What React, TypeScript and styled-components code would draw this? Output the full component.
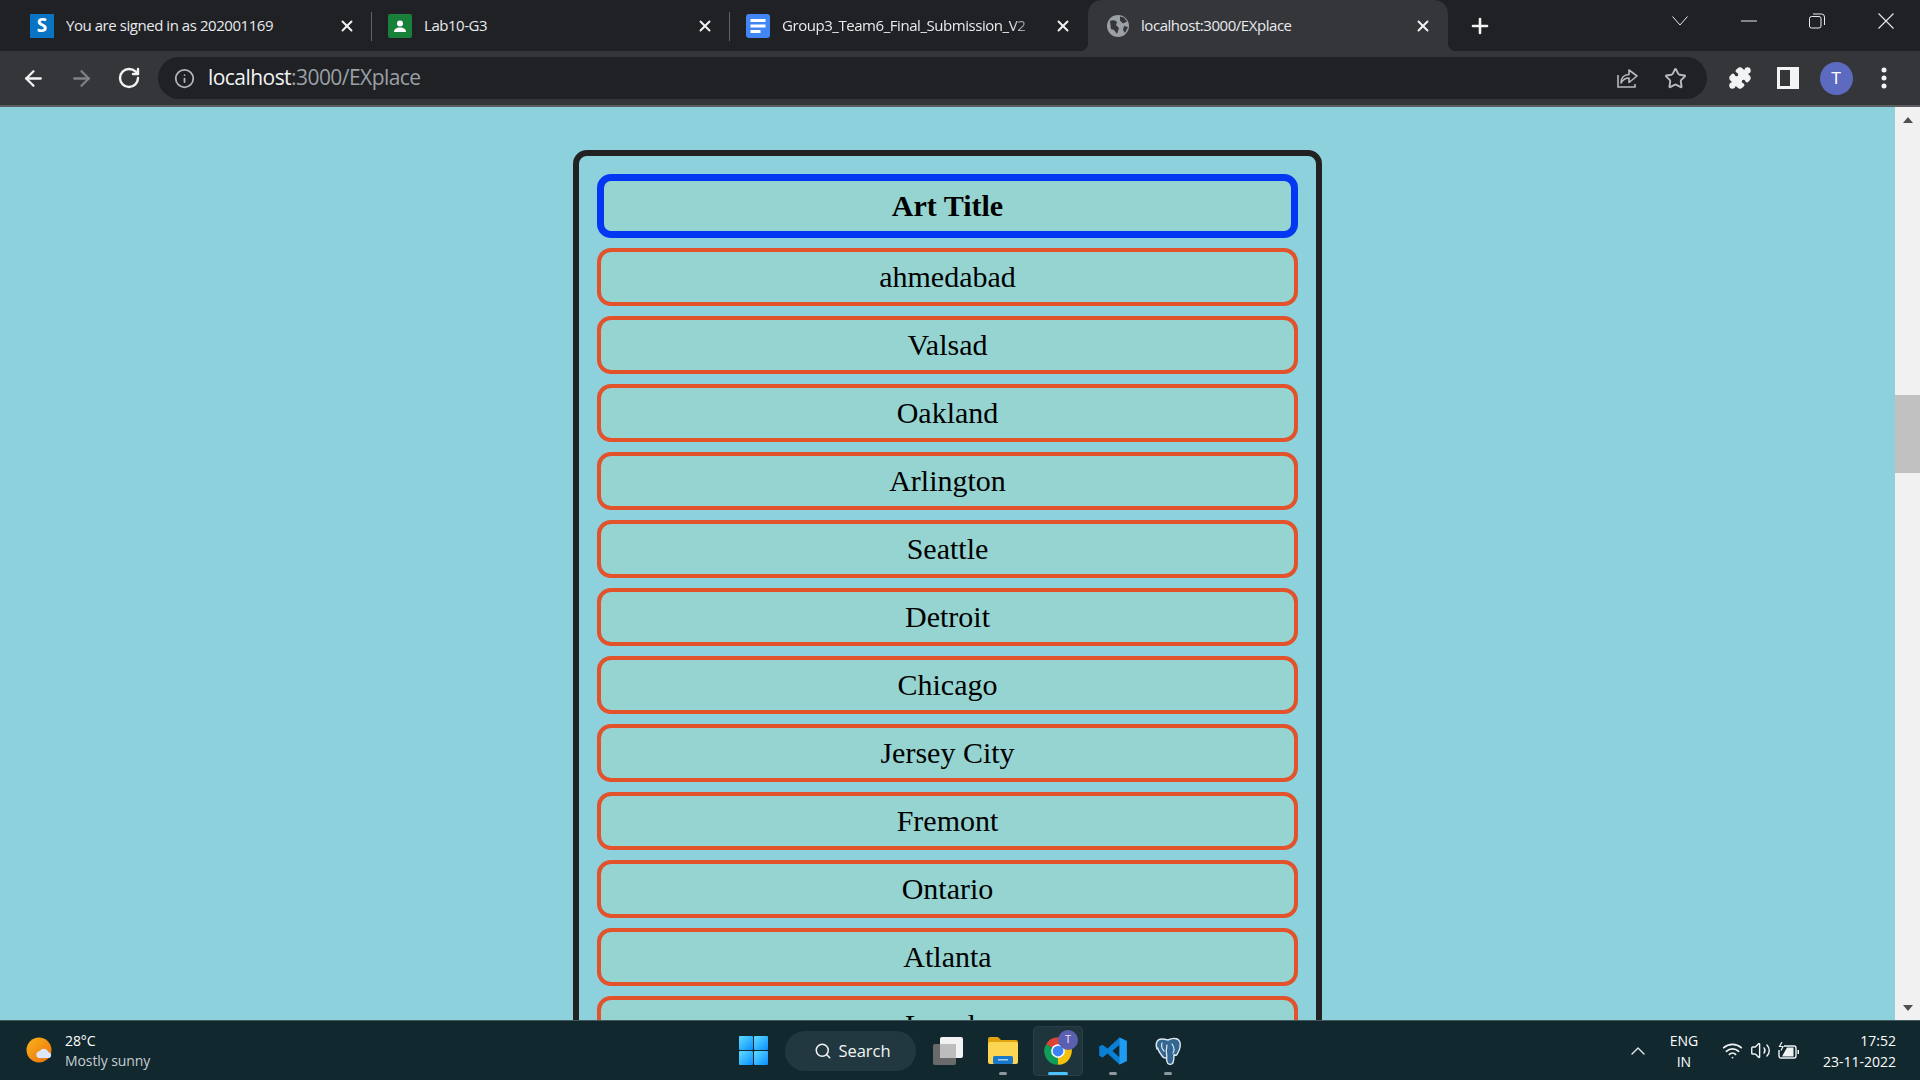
import React from "react";
import styled, { createGlobalStyle } from "styled-components";
import { ArrowLeft, ArrowRight, RotateCw, Info, Star, Puzzle, X, Plus, Search, Wifi, Volume2, ChevronUp } from "lucide-react";

const Global = createGlobalStyle`
  html, body { margin: 0; padding: 0; overflow: hidden; }
  * { box-sizing: border-box; }
`;

const Screen = styled.div`
  width: 1920px; height: 1080px; display: flex; flex-direction: column; overflow: hidden;
  font-family: "Open Sans", "Noto Sans", sans-serif; background: #8dd1dd;
`;

/* Browser frame */
const TabStrip = styled.div`
  height: 51px; background: #202124; display: flex; align-items: stretch; padding-left: 14px; flex: none;
`;
const Tab = styled.div<{ $active?: boolean; $divider?: boolean }>`
  position: relative; width: ${p => (p.$active ? 360 : 358)}px; display: flex; align-items: center; gap: 12px;
  padding: 0 16px 0 ${p => (p.$active ? 19 : 16)}px;
  background: ${p => (p.$active ? "#35363a" : "transparent")};
  border-radius: ${p => (p.$active ? "14px 14px 0 0" : "0")};
  ${p => p.$active && `
    &::before, &::after { content: ""; position: absolute; bottom: 0; width: 8px; height: 8px; }
    &::before { left: -8px; background: radial-gradient(circle at 0 0, transparent 8px, #35363a 8.5px); }
    &::after { right: -8px; background: radial-gradient(circle at 100% 0, transparent 8px, #35363a 8.5px); }
  `}
  ${p => p.$divider && `
    &::after { content: ""; position: absolute; right: 0; top: 12px; bottom: 10px; width: 1px; background: #5f6368; }
  `}
`;
const TabTitle = styled.span<{ $fade?: boolean }>`
  flex: 1; min-width: 0; color: #e8eaed; font-family: "Open Sans", sans-serif; font-size: 15px; letter-spacing: -0.45px;
  white-space: nowrap; overflow: hidden; margin-top: -2px;
  ${p => p.$fade && `-webkit-mask-image: linear-gradient(90deg, #000 88%, transparent 100%); mask-image: linear-gradient(90deg, #000 88%, transparent 100%);`}
`;
const TabClose = styled.span`
  flex: none; width: 18px; height: 18px; color: #f1f3f4; display: flex; align-items: center; justify-content: center; margin-right: 0;
`;
const NewTab = styled.div`
  width: 24px; margin-left: 20px; color: #f1f3f4; display: flex; align-items: center; justify-content: center;
`;
const WindowControls = styled.div`
  margin-left: auto; display: flex; align-items: flex-start;
`;
const WinButton = styled.div`
  width: 68.5px; height: 42px; display: flex; align-items: center; justify-content: center; color: #e8eaed;
`;
const Toolbar = styled.div`
  height: 56px; flex: none; background: #35363a; border-bottom: 2px solid #5c5d60; display: flex; align-items: flex-start;
  padding: 6px 0 0 20px;
`;
const NavButton = styled.div<{ $dim?: boolean }>`
  width: 26px; height: 42px; margin-right: 22px; display: flex; align-items: center; justify-content: center;
  color: ${p => (p.$dim ? "#7f8184" : "#f1f3f4")};
`;
const Omnibox = styled.div`
  width: 1549px; height: 42px; margin-left: -6px; border-radius: 21px; background: #202124; display: flex; align-items: center;
  padding: 0 20px 0 16px; gap: 13px;
`;
const UrlIcon = styled.span`
  display: flex; color: #b4b7bb;
`;
const Url = styled.div`
  flex: 1; font-family: "Open Sans", sans-serif; font-size: 21px; letter-spacing: -0.55px; color: #9aa0a6; margin-top: -2px;
  strong { color: #f1f3f4; font-weight: 400; }
`;
const OmniAction = styled.span`
  width: 24px; height: 24px; display: flex; align-items: center; justify-content: center; color: #b8babd; margin-left: 11px;
`;
const ToolCluster = styled.div`
  display: flex; align-items: center; height: 42px; margin-left: 9px;
`;
const ToolButton = styled.div`
  width: 48px; height: 42px; display: flex; align-items: center; justify-content: center; color: #f1f3f4;
`;
const Avatar = styled.div`
  width: 33px; height: 33px; border-radius: 50%; background: #5c6bc0; color: #fff; display: flex; align-items: center; justify-content: center;
  font-family: "Roboto", sans-serif; font-size: 17px;
`;

/* Page */
const Viewport = styled.div`
  flex: 1; min-height: 0; display: flex; background: #8dd1dd;
`;
const Content = styled.div`
  flex: 1; min-width: 0; overflow: hidden; display: flex; justify-content: center; padding-top: 43px;
`;
const Panel = styled.div`
  width: 749px; height: 1100px; flex: none; border: 6px solid #222222; border-radius: 14px; padding: 18px 18px; display: flex; flex-direction: column; gap: 10px;
`;
const Heading = styled.div`
  height: 64px; flex: none; border: 7px solid #0437f2; border-radius: 14px; background: #96d4d1; color: #000;
  font-family: "Liberation Serif", serif; font-weight: 700; font-size: 30px; display: flex; align-items: center; justify-content: center;
`;
const City = styled.div`
  height: 58px; flex: none; border: 4px solid #e2522b; border-radius: 14px; background: #96d4d1; color: #000;
  font-family: "Liberation Serif", serif; font-size: 30px; display: flex; align-items: center; justify-content: center;
`;
const Scrollbar = styled.div`
  width: 25px; flex: none; background: #f1f1f1; display: flex; flex-direction: column; align-items: stretch;
`;
const ScrollArrow = styled.div<{ $down?: boolean }>`
  height: 25px; flex: none; display: flex; align-items: center; justify-content: center;
  &::before {
    content: ""; width: 0; height: 0; border-left: 5.5px solid transparent; border-right: 5.5px solid transparent;
    ${p => (p.$down ? "border-top: 6px solid #505050;" : "border-bottom: 6px solid #505050;")}
  }
`;
const ScrollTrack = styled.div`
  flex: 1; padding-top: 263px;
`;
const ScrollThumb = styled.div`
  height: 78px; background: #c1c1c1;
`;

/* Taskbar */
const Taskbar = styled.div`
  height: 60px; flex: none; background: #12282f; border-top: 1px solid #45565b; display: grid; grid-template-columns: 739px auto 1fr; align-items: center;
  font-family: "Open Sans", "Noto Sans", sans-serif; color: #fff;
`;
const Weather = styled.div`
  display: flex; align-items: center; gap: 11px; padding-left: 26px;
`;
const WeatherText = styled.div`
  display: flex; flex-direction: column; font-size: 14px; line-height: 20px; letter-spacing: -0.1px;
  span:last-child { color: #c6cdd0; }
`;
const TaskCenter = styled.div`
  display: flex; align-items: center;
`;
const SearchPill = styled.div`
  width: 131px; height: 40px; margin: 0 7px 0 17px; border-radius: 20px; background: #223840; display: flex; align-items: center; justify-content: center; gap: 6px;
  font-size: 16.5px; color: #f3f5f5; padding-left: 4px;
`;
const TaskIcons = styled.div`
  display: flex; gap: 5px;
`;
const TaskCell = styled.div<{ $active?: boolean }>`
  position: relative; width: 50px; height: 50px; border-radius: 5px; display: flex; align-items: center; justify-content: center;
  ${p => p.$active && "background: #1f353c; box-shadow: inset 0 0 0 1px #2a3f46;"}
`;
const RunDot = styled.span<{ $active?: boolean }>`
  position: absolute; bottom: 1px; left: 50%; transform: translateX(-50%); height: 3px; border-radius: 2px;
  width: ${p => (p.$active ? 20 : 8)}px; background: ${p => (p.$active ? "#4cc2ff" : "#8c989c")};
`;
const TeamsBadge = styled.span`
  position: absolute; top: 4px; right: 5px; width: 20px; height: 20px; border-radius: 50%; background: #5c5fb0; color: #dfe0f5; font-size: 11px;
  display: flex; align-items: center; justify-content: center; font-family: "Roboto", sans-serif;
`;
const Tray = styled.div`
  display: flex; align-items: center; justify-content: flex-end; padding-right: 24px; color: #fff;
`;
const TrayChevron = styled.span`
  display: flex; margin-right: 16px; color: #e6eaeb;
`;
const Lang = styled.div`
  width: 36px; text-align: center; font-size: 14px; line-height: 21px; margin-right: 20px;
`;
const TrayGroup = styled.div`
  display: flex; align-items: center; gap: 7px; margin-right: 23px; color: #f0f3f4;
`;
const Clock = styled.div`
  text-align: right; font-size: 14px; line-height: 21px;
`;

const Favicon = styled.span<{ $bg: string; $radius?: number }>`
  flex: none; width: 24px; height: 24px; background: ${p => p.$bg}; border-radius: ${p => p.$radius ?? 0}px; display: flex; align-items: center; justify-content: center;
  color: #fff; font-family: "Open Sans", sans-serif; font-weight: 700; font-size: 19px; line-height: 1;
`;

const cities = ["ahmedabad", "Valsad", "Oakland", "Arlington", "Seattle", "Detroit", "Chicago", "Jersey City", "Fremont", "Ontario", "Atlanta", "Laredo"];

const Classroom = () => (
  <svg width="24" height="24" viewBox="0 0 24 24">
    <rect width="24" height="24" rx="2" fill="#188038" />
    <circle cx="12" cy="9.5" r="3" fill="#fff" />
    <path d="M6 18c0-3 2.5-4.5 6-4.5s6 1.5 6 4.5z" fill="#fff" />
  </svg>
);
const Docs = () => (
  <svg width="24" height="24" viewBox="0 0 24 24">
    <rect width="24" height="24" rx="3" fill="#4285f4" />
    <rect x="4.5" y="5" width="15" height="3" fill="#fff" />
    <rect x="4.5" y="10.5" width="15" height="3" fill="#fff" />
    <rect x="4.5" y="16" width="10" height="3" fill="#fff" />
  </svg>
);
const Globe = () => (
  <svg width="22" height="22" viewBox="0 0 22 22" style={{ flex: "none" }}>
    <circle cx="11" cy="11" r="11" fill="#9aa0a6" />
    <path d="M3 6c3-1 5-1 7 1l-1 3 3 3-2 6-3-4-3-1zM13 1.5l4 1 3 4-4 2-3-3zM17 11l4 1-3 6-2-3z" fill="#35363a" />
  </svg>
);
const ShareIcon = () => (
  <svg width="24" height="24" viewBox="0 0 24 24" fill="none" stroke="currentColor" strokeWidth="1.6">
    <path d="M3 9v12h17v-3" />
    <path d="M14 4v4.5C9 8.5 6 12 6 17c2-3.5 4.5-5 8-5v4.5l8-6.5z" strokeLinejoin="round" />
  </svg>
);
const SidePanel = () => (
  <svg width="22" height="22" viewBox="0 0 22 22">
    <rect width="22" height="22" fill="#f1f3f4" />
    <rect x="3" y="3" width="10" height="16" fill="#35363a" />
  </svg>
);
const Kebab = () => (
  <svg width="6" height="22" viewBox="0 0 6 22" fill="#f1f3f4">
    <circle cx="3" cy="3" r="2.5" />
    <circle cx="3" cy="11" r="2.5" />
    <circle cx="3" cy="19" r="2.5" />
  </svg>
);
const WinChevron = () => (
  <svg width="16" height="10" viewBox="0 0 16 10" fill="none" stroke="currentColor"><path d="M.5.5 8 9 15.5.5" /></svg>
);
const WinMin = () => (
  <svg width="16" height="2" viewBox="0 0 16 2" stroke="currentColor"><path d="M0 1h16" /></svg>
);
const WinRestore = () => (
  <svg width="16" height="16" viewBox="0 0 16 16" fill="none" stroke="currentColor">
    <rect x=".5" y="3.5" width="11.5" height="11.5" rx="2" />
    <path d="M4 1h8.5a3 3 0 0 1 3 3v8" />
  </svg>
);
const WinClose = () => (
  <svg width="16" height="16" viewBox="0 0 16 16" stroke="currentColor" strokeWidth="1.1"><path d="M.5.5l15 15M15.5.5l-15 15" /></svg>
);

const WeatherIcon = () => (
  <svg width="28" height="28" viewBox="0 0 28 28">
    <defs>
      <linearGradient id="sun" x1="0" y1="0" x2="1" y2="1">
        <stop offset="0" stopColor="#f9b418" /><stop offset="1" stopColor="#ee6f10" />
      </linearGradient>
    </defs>
    <circle cx="13" cy="13" r="12.5" fill="url(#sun)" />
    <path d="M13 21a3.4 3.4 0 0 1 .5-6.7 5 5 0 0 1 9 .6 3.2 3.2 0 0 1 .7 6.1z" fill="#dbe6fa" />
  </svg>
);
const StartIcon = () => (
  <svg width="29" height="29" viewBox="0 0 29 29">
    <defs>
      <linearGradient id="st" x1="0" y1="0" x2="1" y2="1">
        <stop offset="0" stopColor="#5fdcff" /><stop offset="1" stopColor="#0a8fff" />
      </linearGradient>
    </defs>
    <rect x="0" y="0" width="14" height="14" rx="1" fill="url(#st)" />
    <rect x="15" y="0" width="14" height="14" rx="1" fill="url(#st)" />
    <rect x="0" y="15" width="14" height="14" rx="1" fill="url(#st)" />
    <rect x="15" y="15" width="14" height="14" rx="1" fill="url(#st)" />
  </svg>
);
const TaskViewIcon = () => (
  <svg width="30" height="28" viewBox="0 0 30 28">
    <rect x="7" y="0" width="23" height="21" rx="2" fill="#f2f2f2" />
    <rect x="0" y="7" width="23" height="21" rx="2" fill="#6a6a6a" />
    <rect x="7" y="7" width="16" height="14" fill="#bdbdbd" />
  </svg>
);
const ExplorerIcon = () => (
  <svg width="30" height="27" viewBox="0 0 30 27">
    <path d="M0 2a2 2 0 0 1 2-2h8l3 3h15a2 2 0 0 1 2 2v3H0z" fill="#e0a40f" />
    <rect x="0" y="5" width="30" height="22" rx="2" fill="#fcd652" />
    <rect x="5" y="19" width="20" height="8" rx="1.5" fill="#1a78c8" />
    <rect x="10" y="22" width="10" height="1.5" fill="#9fd3f5" />
  </svg>
);
const ChromeIcon = () => (
  <svg width="30" height="30" viewBox="0 0 24 24">
    <path d="M12 12 2.47 6.5A11 11 0 0 1 21.53 6.5z" fill="#db4437" />
    <path d="M12 12 21.53 6.5A11 11 0 0 1 12 23z" fill="#f4c20d" />
    <path d="M12 12 12 23A11 11 0 0 1 2.47 6.5z" fill="#0f9d58" />
    <circle cx="12" cy="12" r="5.5" fill="#fff" />
    <circle cx="12" cy="12" r="4.3" fill="#3b82f6" />
  </svg>
);
const VsCodeIcon = () => (
  <svg width="30" height="30" viewBox="0 0 24 24">
    <path d="M17.2 1.2 23 4v16l-5.8 2.8L7.6 14l-4 3.1L1 15.8V8.2l2.6-1.3 4 3.1zM17.2 7l-5.6 5 5.6 5z" fill="#0a7fd3" fillRule="evenodd" />
    <path d="M17.2 1.2 23 4v16l-5.8 2.8z" fill="#1f9cf0" />
  </svg>
);
const PostgresIcon = () => (
  <svg width="30" height="30" viewBox="0 0 30 30">
    <path d="M4 13C2 7 4 3 9 3c2 0 4 .5 6 1 2-1 4-2 7-1.5 5 .5 6 5 5 9-.5 3-2 5-3 7-1 1.500-2 .5-3 0 0 3 0 7-1.500 9-2 1.500-5 1-5.500-2-.5-2-.5-3-.5-4-1 1-3 .5-4-1-1.500-2-4-5-5-8.500z" fill="#336791" stroke="#dfe8ee" strokeWidth="1.400" strokeLinejoin="round" />
    <path d="M14 9c-1 4-1 8 0 12M19 8c2 3 3 6 1 9M9 7c-1 3 0 6 2 8" fill="none" stroke="#dfe8ee" strokeWidth="1.200" strokeLinecap="round" />
  </svg>
);
const BatteryIcon = () => (
  <svg width="22" height="18" viewBox="0 0 22 18" fill="none" stroke="currentColor" strokeWidth="1.400">
    <path d="M6 4H16a2 2 0 0 1 2 2v8a2 2 0 0 1-2 2H3a2 2 0 0 1-2-2V8" />
    <path d="M4 14.500 9 5.500h6.500v9z" fill="currentColor" stroke="none" />
    <path d="M4 0 1.500 4.500H5L3 8.500" strokeWidth="1.200" />
    <rect x="19.500" y="8" width="1.500" height="4" fill="currentColor" stroke="none" />
  </svg>
);

export default function App() {
  return (
    <Screen>
      <Global />
      <TabStrip>
        <Tab $divider>
          <Favicon $bg="#0a74c4">S</Favicon>
          <TabTitle>You are signed in as 202001169</TabTitle>
          <TabClose><X size={18} strokeWidth={2.6} /></TabClose>
        </Tab>
        <Tab $divider>
          <Classroom />
          <TabTitle>Lab10-G3</TabTitle>
          <TabClose><X size={18} strokeWidth={2.6} /></TabClose>
        </Tab>
        <Tab>
          <Docs />
          <TabTitle $fade>Group3_Team6_Final_Submission_V2</TabTitle>
          <TabClose><X size={18} strokeWidth={2.6} /></TabClose>
        </Tab>
        <Tab $active>
          <Globe />
          <TabTitle>localhost:3000/EXplace</TabTitle>
          <TabClose><X size={18} strokeWidth={2.6} /></TabClose>
        </Tab>
        <NewTab><Plus size={24} strokeWidth={2.6} /></NewTab>
        <WindowControls>
          <WinButton><WinChevron /></WinButton>
          <WinButton><WinMin /></WinButton>
          <WinButton><WinRestore /></WinButton>
          <WinButton><WinClose /></WinButton>
        </WindowControls>
      </TabStrip>
      <Toolbar>
        <NavButton><ArrowLeft size={25} strokeWidth={2.2} /></NavButton>
        <NavButton $dim><ArrowRight size={25} strokeWidth={2.2} /></NavButton>
        <NavButton><RotateCw size={24} strokeWidth={2.4} /></NavButton>
        <Omnibox>
          <UrlIcon><Info size={21} strokeWidth={2} /></UrlIcon>
          <Url><strong>localhost</strong>:3000/EXplace</Url>
          <OmniAction><ShareIcon /></OmniAction>
          <OmniAction><Star size={23} strokeWidth={2} /></OmniAction>
        </Omnibox>
        <ToolCluster>
          <ToolButton><Puzzle size={24} fill="currentColor" strokeWidth={1.5} /></ToolButton>
          <ToolButton><SidePanel /></ToolButton>
          <ToolButton><Avatar>T</Avatar></ToolButton>
          <ToolButton><Kebab /></ToolButton>
        </ToolCluster>
      </Toolbar>
      <Viewport>
        <Content>
          <Panel>
            <Heading>Art Title</Heading>
            {cities.map(c => <City key={c}>{c}</City>)}
          </Panel>
        </Content>
        <Scrollbar>
          <ScrollArrow />
          <ScrollTrack><ScrollThumb /></ScrollTrack>
          <ScrollArrow $down />
        </Scrollbar>
      </Viewport>
      <Taskbar>
        <Weather>
          <WeatherIcon />
          <WeatherText>
            <span>28°C</span>
            <span>Mostly sunny</span>
          </WeatherText>
        </Weather>
        <TaskCenter>
          <StartIcon />
          <SearchPill><Search size={18} strokeWidth={2} />Search</SearchPill>
          <TaskIcons>
            <TaskCell><TaskViewIcon /></TaskCell>
            <TaskCell><ExplorerIcon /><RunDot /></TaskCell>
            <TaskCell $active><ChromeIcon /><TeamsBadge>T</TeamsBadge><RunDot $active /></TaskCell>
            <TaskCell><VsCodeIcon /><RunDot /></TaskCell>
            <TaskCell><PostgresIcon /><RunDot /></TaskCell>
          </TaskIcons>
        </TaskCenter>
        <Tray>
          <TrayChevron><ChevronUp size={24} strokeWidth={1.4} /></TrayChevron>
          <Lang>ENG<br />IN</Lang>
          <TrayGroup>
            <Wifi size={21} strokeWidth={2} />
            <Volume2 size={21} strokeWidth={1.6} />
            <BatteryIcon />
          </TrayGroup>
          <Clock>17:52<br />23-11-2022</Clock>
        </Tray>
      </Taskbar>
    </Screen>
  );
}
